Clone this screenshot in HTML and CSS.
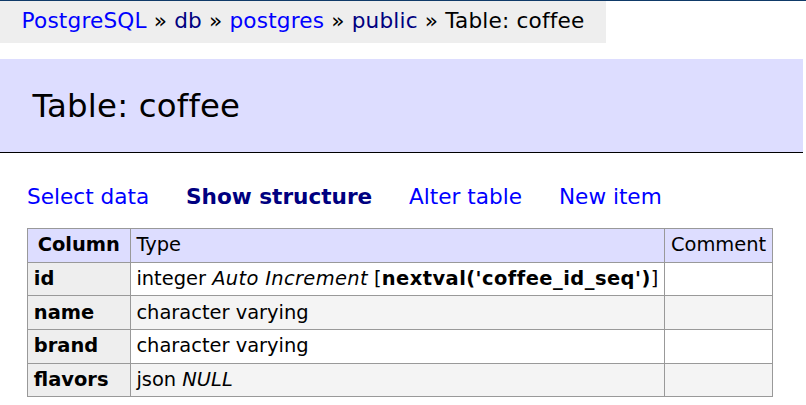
FILE: index.html
```
<!DOCTYPE html>
<html>
<head>
<meta charset="utf-8">
<link rel="stylesheet" href="styles.css">
</head>
<body>
<div class="topline"></div>
<p class="breadcrumb"><a href="#" class="link">PostgreSQL</a> » <a href="#" class="visited">db</a> » <a href="#" class="link">postgres</a> » <a href="#" class="visited">public</a> » Table: coffee</p>
<div class="content">
<h2 class="title">Table: coffee</h2>
<p class="links"><a href="#" class="link">Select data</a> <a href="#" class="active">Show structure</a> <a href="#" class="link">Alter table</a> <a href="#" class="link">New item</a></p>
<table class="structure">
<thead>
<tr><th class="hcol">Column</th><td>Type</td><td>Comment</td></tr>
</thead>
<tbody>
<tr><th>id</th><td>integer <i class="it">Auto Increment</i> [<b class="seq">nextval('coffee_id_seq')</b>]</td><td></td></tr>
<tr class="even"><th>name</th><td>character varying</td><td></td></tr>
<tr><th>brand</th><td>character varying</td><td></td></tr>
<tr class="even"><th>flavors</th><td>json <i>NULL</i></td><td></td></tr>
</tbody>
</table>
</div>
</body>
</html>
```
FILE: styles.css
```
html, body {
  margin: 0;
  padding: 0;
  background: #fff;
}
body {
  font-family: "DejaVu Sans", Verdana, sans-serif;
  font-size: 21.6px;
  line-height: 1.25;
  color: #000;
  width: 806px;
}
a {
  text-decoration: none;
}
.link {
  color: #0000ff;
}
.visited {
  color: #000080;
}
.topline {
  height: 1px;
  background: #0f3a68;
}
.breadcrumb {
  margin: 0;
  display: inline-block;
  background: #eee;
  height: 42px;
  line-height: 39px;
  padding: 0 21.6px;
  letter-spacing: 0.18px;
  white-space: nowrap;
  vertical-align: top;
}
.content {
  width: 803px;
  padding-top: 16px;
}
.title {
  margin: 0 0 30px 0;
  font-size: 32.4px;
  font-weight: normal;
  line-height: 40.5px;
  padding: 26.8px 32.4px 25.7px;
  background: #ddf;
  border-bottom: 1px solid #000;
  color: #000;
  letter-spacing: 0.2px;
}
.links {
  margin: 0 0 18px 0;
  padding-left: 27px;
  line-height: 27px;
  white-space: nowrap;
}
.links a {
  margin-right: 30px;
}
.links .active {
  color: #000080;
  font-weight: bold;
}
.structure {
  margin: 0 0 0 27px;
  border-collapse: collapse;
  font-size: 19.44px;
  line-height: 1.25;
}
.structure td, .structure th {
  border: 1px solid #999;
  padding: 4.2px 5.8px;
  text-align: left;
  white-space: nowrap;
}
.structure .it {
  letter-spacing: 0.35px;
}
.structure .seq {
  letter-spacing: 0.47px;
}
.structure tbody th {
  background: #eee;
}
.structure thead td, .structure thead th {
  background: #ddf;
}
.structure thead .hcol {
  text-align: center;
  padding: 4.2px 9.7px;
}
.structure tr.even td {
  background: #f4f4f4;
}
```
